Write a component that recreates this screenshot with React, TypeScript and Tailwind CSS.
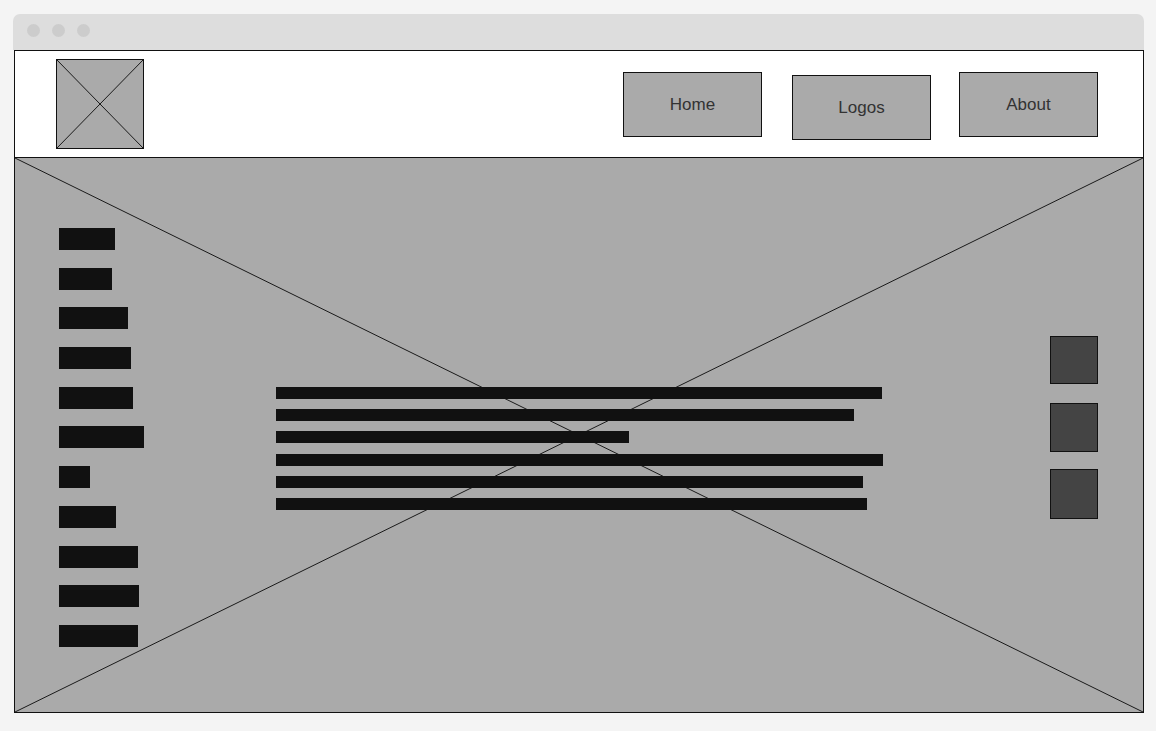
import React from 'react';

const sideBars = [56, 53, 69, 72, 74, 85, 31, 57, 79, 80, 79];
const textLines = [606, 578, 353, 607, 587, 591];

function Cross({ stroke = '#1a1a1a' }: { stroke?: string }) {
  return (
    <svg className="absolute inset-0 w-full h-full pointer-events-none" preserveAspectRatio="none">
      <line x1="0" y1="0" x2="100%" y2="100%" stroke={stroke} strokeWidth="1" />
      <line x1="100%" y1="0" x2="0" y2="100%" stroke={stroke} strokeWidth="1" />
    </svg>
  );
}

function NavButton({ label, offset }: { label: string; offset?: boolean }) {
  return (
    <div
      className={
        'w-[139px] h-[65px] border border-[#111] bg-[#aaaaaa] flex items-center justify-center text-[17px] text-[#333] ' +
        (offset ? 'mt-[3px]' : '')
      }
    >
      {label}
    </div>
  );
}

export default function App() {
  return (
    <div
      className="min-h-screen bg-[#f4f4f4] pt-[14px] pl-[13px]"
      style={{ fontFamily: '"Liberation Sans", Arial, sans-serif' }}
    >
      <div className="w-[1131px]">
        {/* Title bar */}
        <div className="h-[36px] bg-[#dddddd] rounded-t-[7px] flex items-start gap-[12px] pl-[14px] pt-[10px]">
          <span className="w-[13px] h-[13px] rounded-full bg-[#cccccc]" />
          <span className="w-[13px] h-[13px] rounded-full bg-[#cccccc]" />
          <span className="w-[13px] h-[13px] rounded-full bg-[#cccccc]" />
        </div>

        <div className="ml-[1px] w-[1130px]">
          {/* Header */}
          <header className="h-[107px] bg-white border-x border-t border-[#111] flex items-start pl-[41px] pr-[45px]">
            <div className="relative mt-[8px] w-[88px] h-[90px] border border-[#111] bg-[#aaaaaa]">
              <Cross />
            </div>
            <nav className="ml-auto mt-[21px] flex items-start">
              <NavButton label="Home" />
              <div className="ml-[30px]">
                <NavButton label="Logos" offset />
              </div>
              <div className="ml-[28px]">
                <NavButton label="About" />
              </div>
            </nav>
          </header>

          {/* Hero */}
          <section className="relative h-[556px] bg-[#aaaaaa] border border-[#111] flex items-start pl-[44px] pt-[70px] pr-[45px]">
            <Cross />
            <div className="relative w-[217px] flex flex-col gap-[17.7px]">
              {sideBars.map((w, i) => (
                <div key={i} className="h-[22px] bg-[#111111]" style={{ width: w }} />
              ))}
            </div>
            <div className="relative mt-[159px] flex flex-col gap-[10.2px]">
              {textLines.map((w, i) => (
                <div key={i} className="h-[12px] bg-[#111111]" style={{ width: w }} />
              ))}
            </div>
            <div className="relative ml-auto mt-[108px] flex flex-col">
              <div className="w-[48px] h-[48px] bg-[#444444] border border-[#111]" />
              <div className="w-[48px] h-[49px] bg-[#444444] border border-[#111] mt-[19px]" />
              <div className="w-[48px] h-[50px] bg-[#444444] border border-[#111] mt-[17px]" />
            </div>
          </section>
        </div>
      </div>
    </div>
  );
}
